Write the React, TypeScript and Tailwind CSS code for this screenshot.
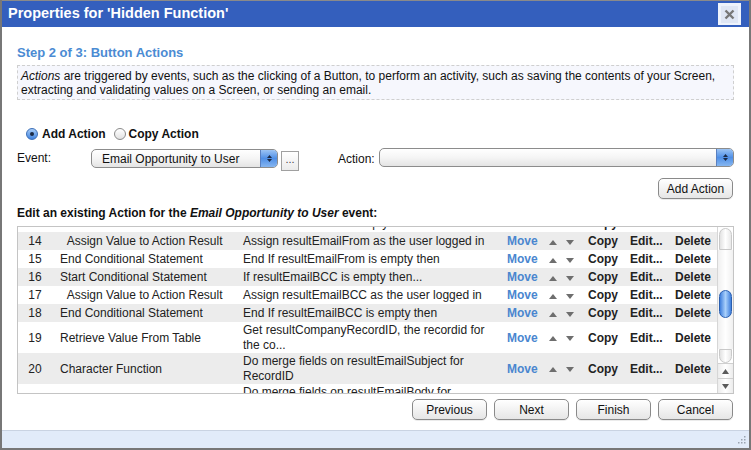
import React from "react";

type Row = { n: number; name: string; indent?: boolean; desc: string[] };

const ROWS: Row[] = [
  { n: 13, name: "Start Conditional Statement", desc: ["If resultEmailFrom is empty then..."] },
  { n: 14, name: "Assign Value to Action Result", indent: true, desc: ["Assign resultEmailFrom as the user logged in"] },
  { n: 15, name: "End Conditional Statement", desc: ["End If resultEmailFrom is empty then"] },
  { n: 16, name: "Start Conditional Statement", desc: ["If resultEmailBCC is empty then..."] },
  { n: 17, name: "Assign Value to Action Result", indent: true, desc: ["Assign resultEmailBCC as the user logged in"] },
  { n: 18, name: "End Conditional Statement", desc: ["End If resultEmailBCC is empty then"] },
  { n: 19, name: "Retrieve Value From Table", desc: ["Get resultCompanyRecordID, the recordid for", "the co..."] },
  { n: 20, name: "Character Function", desc: ["Do merge fields on resultEmailSubject for", "RecordID"] },
  { n: 21, name: "Character Function", desc: ["Do merge fields on resultEmailBody for", "RecordID"] },
];

function Tri({ up }: { up?: boolean }) {
  return (
    <svg width="8" height="5" viewBox="0 0 8 5">
      <path d={up ? "M0 5 L4 0 L8 5 Z" : "M0 0 L4 5 L8 0 Z"} fill="#6e6e6e" />
    </svg>
  );
}

function MacButton({ children, className = "" }: { children: React.ReactNode; className?: string }) {
  return (
    <div
      className={`flex h-[21px] items-center justify-center rounded-[5px] border border-[#8a8a8a] bg-gradient-to-b from-white to-[#e6e6e6] text-[12px] text-[#111] shadow-[0_1px_0_rgba(0,0,0,0.08)] ${className}`}
    >
      {children}
    </div>
  );
}

function MacSelect({ label, className = "" }: { label?: string; className?: string }) {
  return (
    <div
      className={`flex h-[19px] items-stretch overflow-hidden rounded-[5px] border border-[#8c8c8c] bg-gradient-to-b from-white via-[#f5f5f5] to-[#e4e4e4] ${className}`}
    >
      <div className="flex flex-1 items-center pl-[10px] text-[12px] text-[#111]">{label}</div>
      <div className="flex w-[17px] flex-col items-center justify-center gap-[1px] border-l border-[#5a80c0] bg-gradient-to-b from-[#9cc4f4] via-[#4f8fe6] to-[#86b6f0]">
        <svg width="5" height="3" viewBox="0 0 5 3">
          <path d="M0 3 L2.5 0 L5 3 Z" fill="#1b2b48" />
        </svg>
        <svg width="5" height="3" viewBox="0 0 5 3">
          <path d="M0 0 L2.5 3 L5 0 Z" fill="#1b2b48" />
        </svg>
      </div>
    </div>
  );
}

function ActionRow({ row }: { row: Row }) {
  const gray = row.n % 2 === 0;
  const tall = row.desc.length > 1;
  return (
    <div
      className={`flex items-center text-[12px] text-[#222] ${tall ? "h-[31px]" : "h-[18px]"} ${gray ? "bg-[#ececec]" : "bg-white"}`}
    >
      <div className="w-[34px] text-center">{row.n}</div>
      <div className="w-[191px] whitespace-nowrap pl-[8px]">
        {row.indent ? "\u00a0\u00a0" : ""}
        {row.name}
      </div>
      <div className="w-[264px] leading-[15px]">
        {row.desc.map((d) => (
          <div key={d} className="whitespace-nowrap">
            {d}
          </div>
        ))}
      </div>
      <div className="w-[41px] font-bold text-[#4a86cf]">Move</div>
      <div className="flex w-[40px] items-center gap-[9px] pl-[1px] pt-[2px]">
        <Tri up />
        <Tri />
      </div>
      <div className="w-[42px] font-bold">Copy</div>
      <div className="w-[45px] font-bold">Edit...</div>
      <div className="flex-1 font-bold">Delete</div>
    </div>
  );
}

function ScrollBar() {
  return (
    <div className="flex w-[16px] flex-col border-l border-[#d6d6d6] bg-white">
      <div className="mx-[1px] mt-[1px] h-[22px] rounded-t-full border border-[#c9c9c9] bg-gradient-to-r from-[#e2e2e2] via-white to-[#e8e8e8]" />
      <div className="flex-1 bg-gradient-to-r from-[#f0f0f0] via-white to-[#f0f0f0]">
        <div className="mx-[1px] mt-[40px] h-[28px] rounded-full border border-[#2a5fb0] bg-gradient-to-r from-[#3f7fdc] via-[#a9d0fb] to-[#3f7fdc]" />
      </div>
      <div className="mx-[1px] h-[14px] rounded-b-full border border-[#c9c9c9] bg-gradient-to-r from-[#e2e2e2] via-white to-[#e8e8e8]" />
      <div className="flex h-[15px] items-center justify-center border-t border-[#cfcfcf] bg-gradient-to-r from-[#ececec] via-white to-[#ececec]">
        <svg width="7" height="5" viewBox="0 0 7 5">
          <path d="M0 5 L3.5 0 L7 5 Z" fill="#5a5a5a" />
        </svg>
      </div>
      <div className="flex h-[15px] items-center justify-center border-t border-[#cfcfcf] bg-gradient-to-r from-[#ececec] via-white to-[#ececec]">
        <svg width="7" height="5" viewBox="0 0 7 5">
          <path d="M0 0 L3.5 5 L7 0 Z" fill="#5a5a5a" />
        </svg>
      </div>
    </div>
  );
}

export default function App() {
  return (
    <div
      className="flex h-[450px] w-[751px] flex-col border-x-2 border-b-2 border-[#777] bg-white"
      style={{ fontFamily: '"Liberation Sans", Arial, sans-serif' }}
    >
      <div className="flex h-[27px] items-center border-t border-[#8a8a8a] bg-[#345fbd] pl-[6px]">
        <span className="text-[14.5px] font-bold text-white">Properties for 'Hidden Function'</span>
        <div className="ml-auto mr-[8px] flex h-[22px] w-[23px] items-center justify-center bg-[#eef3fc]">
          <div className="flex h-[17px] w-[17px] items-center justify-center bg-[#dfe6f4]">
            <svg width="11" height="11" viewBox="0 0 11 11">
              <path d="M1.5 1.5 L9.5 9.5 M9.5 1.5 L1.5 9.5" stroke="#777" strokeWidth="2.4" />
            </svg>
          </div>
        </div>
      </div>

      <div className="flex flex-1 flex-col px-[15px]">
        <div className="mt-[18px] text-[13px] font-bold leading-[16px] text-[#4b8bd3]">Step 2 of 3: Button Actions</div>
        <div className="mt-[4px] h-[35px] border border-dashed border-[#cfcfcf] bg-[#f6f7fd] px-[3px] pt-[3px] text-[12px] leading-[14px] text-[#111]">
          <i>Actions</i> are triggered by events, such as the clicking of a Button, to perform an activity, such as saving the contents of your Screen,
          <br />
          extracting and validating values on a Screen, or sending an email.
        </div>

        <div className="mt-[26px] flex h-[16px] items-center pl-[9px] text-[12px] font-bold text-[#111]">
          <div className="flex h-[12px] w-[12px] items-center justify-center rounded-full border border-[#3b6fb8] bg-gradient-to-b from-[#a8cdf7] to-[#3f82de]">
            <div className="h-[4px] w-[4px] rounded-full bg-[#1a2a44]" />
          </div>
          <span className="ml-[4px]">Add Action</span>
          <div className="ml-[8px] h-[12px] w-[12px] rounded-full border border-[#8a8a8a] bg-gradient-to-b from-white to-[#e2e2e2]" />
          <span className="ml-[3px]">Copy Action</span>
        </div>

        <div className="mt-[6px] flex h-[23px] items-start text-[12px] text-[#111]">
          <div className="mt-[1px] w-[74px]">Event:</div>
          <MacSelect label="Email Opportunity to User" className="mt-[1px] w-[187px]" />
          <div className="ml-[3px] mt-[3px] flex h-[20px] w-[18px] items-center justify-center border border-[#a0a0a0] bg-gradient-to-b from-white to-[#ebebeb] pb-[4px] text-[11px] text-[#444]">
            ...
          </div>
          <div className="ml-[39px] mt-[2px]">Action:</div>
          <MacSelect className="ml-[4px] flex-1" />
        </div>

        <div className="mt-[7px] flex justify-end">
          <MacButton className="mr-[1px] w-[75px]">Add Action</MacButton>
        </div>

        <div className="mt-[7px] text-[12px] font-bold leading-[14px] text-[#111]">
          Edit an existing Action for the <i>Email Opportunity to User</i> event:
        </div>

        <div className="mt-[6px] flex h-[168px] border border-[#c4c4c4]">
          <div className="flex-1 overflow-hidden">
            <div className="-mt-[13px]">
              {ROWS.map((r) => (
                <ActionRow key={r.n} row={r} />
              ))}
            </div>
          </div>
          <ScrollBar />
        </div>

        <div className="mt-[5px] flex justify-end gap-[7px] pr-[1px]">
          <MacButton className="w-[75px]">Previous</MacButton>
          <MacButton className="w-[75px]">Next</MacButton>
          <MacButton className="w-[75px]">Finish</MacButton>
          <MacButton className="w-[75px]">Cancel</MacButton>
        </div>
      </div>

      <div className="flex h-[18px] items-end justify-end border-t border-[#c9d3e2] bg-[#e1ebf9] pb-[2px] pr-[3px]">
        <svg width="10" height="10" viewBox="0 0 10 10">
          <g fill="#9aa3b0">
            <rect x="8" y="0" width="1.5" height="1.5" />
            <rect x="5" y="3" width="1.5" height="1.5" />
            <rect x="8" y="3" width="1.5" height="1.5" />
            <rect x="2" y="6" width="1.5" height="1.5" />
            <rect x="5" y="6" width="1.5" height="1.5" />
            <rect x="8" y="6" width="1.5" height="1.5" />
          </g>
        </svg>
      </div>
    </div>
  );
}
